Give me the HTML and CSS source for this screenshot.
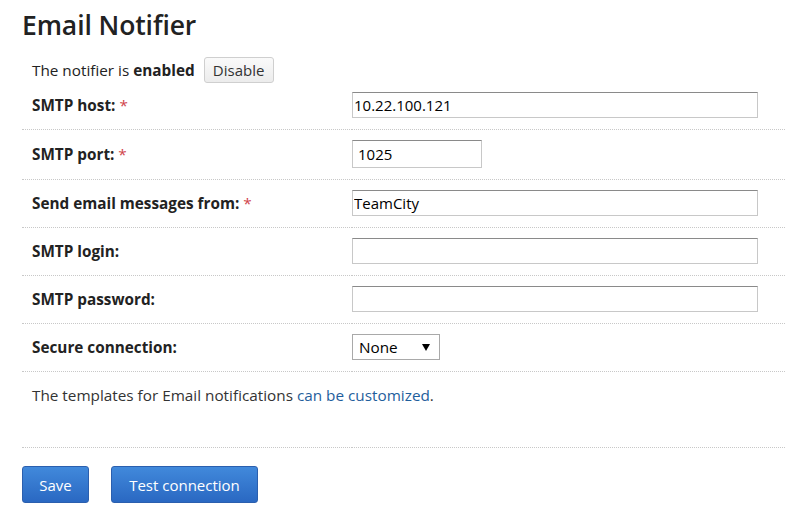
FILE: index.html
```html
<!DOCTYPE html>
<html>
<head>
<meta charset="utf-8">
<link rel="stylesheet" href="styles.css">
</head>
<body>
<div class="page">
  <h1 class="title">Email Notifier</h1>
  <div class="status"><span>The notifier is <b>enabled</b></span><button class="btn-plain">Disable</button></div>
  <table class="form">
    <tr>
      <th>SMTP host: <span class="req">*</span></th>
      <td><input class="field wide" type="text" value="10.22.100.121"></td>
    </tr>
    <tr>
      <th>SMTP port: <span class="req">*</span></th>
      <td><input class="field port" type="text" value="1025"></td>
    </tr>
    <tr>
      <th>Send email messages from: <span class="req">*</span></th>
      <td><input class="field wide" type="text" value="TeamCity"></td>
    </tr>
    <tr>
      <th>SMTP login:</th>
      <td><input class="field wide" type="text" value=""></td>
    </tr>
    <tr>
      <th>SMTP password:</th>
      <td><input class="field wide" type="password" value=""></td>
    </tr>
    <tr>
      <th>Secure connection:</th>
      <td><span class="select"><span class="select-value">None</span><span class="select-arrow"></span></span></td>
    </tr>
    <tr>
      <td class="note" colspan="2">The templates for Email notifications <a href="#">can be customized</a>.</td>
    </tr>
  </table>
  <div class="actions">
    <button class="btn-primary save">Save</button>
    <button class="btn-primary test">Test connection</button>
  </div>
</div>
</body>
</html>
```

FILE: styles.css
```css
html, body {
  margin: 0;
  padding: 0;
  background: #fff;
}
body {
  font-family: "Open Sans", "Noto Sans", sans-serif;
  font-size: 15.3px;
  color: #222;
}
.page {
  padding-left: 22px;
}
.title {
  margin: 0;
  padding-top: 6px;
  font-size: 26.5px;
  font-weight: 600;
  line-height: 38px;
  color: #222;
  letter-spacing: -0.1px;
}
.status {
  height: 26px;
  margin-top: 13px;
  padding-left: 10px;
  display: flex;
  align-items: center;
  gap: 9px;
  color: #222;
}
.status b {
  font-weight: 700;
}
.btn-plain {
  box-sizing: border-box;
  width: 70px;
  height: 26px;
  padding: 0;
  font-family: inherit;
  font-size: 15px;
  color: #333;
  background: linear-gradient(#fafafa, #ececec);
  border: 1px solid #cfcfcf;
  border-radius: 3px;
}
.form {
  width: 100%;
  border-collapse: collapse;
}
.form th, .form td {
  border-bottom: 1px dotted #c8c8c8;
  padding: 10px 0 11px 0;
  vertical-align: middle;
  text-align: left;
}
.form th {
  width: 320px;
  padding-left: 10px;
  font-weight: 700;
  color: #222;
}
.form tr:first-child th, .form tr:first-child td {
  padding-top: 9px;
}
.req {
  color: #d0434a;
  font-weight: 400;
}
.field {
  display: block;
  box-sizing: border-box;
  height: 26px;
  padding: 0 1px;
  font-family: inherit;
  font-size: 15px;
  color: #000;
  border: 1px solid #c8c8c8;
  border-top-color: #8a8a8a;
  border-radius: 0;
  outline: none;
}
.field.wide {
  width: 406px;
}
.field.port {
  width: 130px;
  height: 28px;
  padding: 0 5px;
}
.select {
  position: relative;
  display: flex;
  align-items: center;
  box-sizing: border-box;
  width: 88px;
  height: 26px;
  padding-left: 6px;
  border: 1px solid #a9a9a9;
  color: #000;
}
.select-arrow {
  position: absolute;
  right: 9px;
  top: 9px;
  width: 0;
  height: 0;
  border-left: 4px solid transparent;
  border-right: 4px solid transparent;
  border-top: 7px solid #000;
}
.form td.note {
  padding: 13px 10px 42px;
  color: #333;
}
.note a {
  color: #1f5e9c;
  text-decoration: none;
}
.actions {
  display: flex;
  gap: 22px;
  padding-top: 18px;
}
.btn-primary {
  box-sizing: border-box;
  height: 37px;
  padding: 0;
  font-family: inherit;
  font-size: 15px;
  color: #fff;
  background: linear-gradient(#4189db, #2a68c2);
  border: 1px solid #2b5fae;
  border-radius: 3px;
}
.save {
  width: 67px;
}
.test {
  width: 147px;
}
```
